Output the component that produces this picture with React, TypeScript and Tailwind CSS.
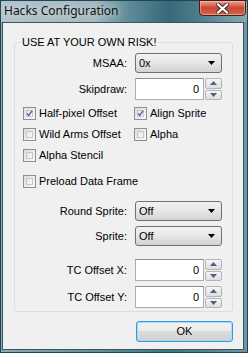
import React from 'react'

const font = { fontFamily: '"Liberation Sans", Arial, sans-serif' }

function Check({ checked, label }: { checked?: boolean; label: string }) {
  return (
    <div className="flex items-center h-[13px]">
      <div className="w-[13px] h-[13px] border border-[#8f8f8f] bg-gradient-to-br from-[#dcdcdc] to-[#fbfbfb] p-[2px] flex items-center justify-center">
        <div className="w-full h-full border border-[#c7c7c7] bg-gradient-to-br from-[#e4e4e4] to-[#fafafa] flex items-center justify-center">
          {checked && (
            <svg width="9" height="9" viewBox="0 0 9 9" className="-m-[1px]">
              <path d="M1.5 4.5 L3.6 7 L7.8 1.2" fill="none" stroke="#4a5f97" strokeWidth="1.7" />
            </svg>
          )}
        </div>
      </div>
      <span className="ml-[3px] text-[11px] leading-[13px] text-black whitespace-nowrap">{label}</span>
    </div>
  )
}

function Combo({ value }: { value: string }) {
  return (
    <div className="w-[87px] h-[20px] rounded-[3px] border border-[#707070] bg-gradient-to-b from-[#f2f2f2] via-[#e6e6e6] to-[#d2d2d2] flex items-center justify-between pl-[3px] pr-[6px]">
      <span className="text-[11px] text-black">{value}</span>
      <svg width="7" height="4" viewBox="0 0 7 4">
        <path d="M0 0 H7 L3.5 4 Z" fill="#000" />
      </svg>
    </div>
  )
}

function Spin({ value }: { value: string }) {
  return (
    <div className="flex h-[22px]">
      <div className="w-[69px] h-full border border-[#abadb3] border-t-[#8a8c93] bg-white flex items-center justify-end pr-[4px]">
        <span className="text-[11px] text-black">{value}</span>
      </div>
      <div className="w-[17px] h-full flex flex-col ml-[1px] gap-[1px]">
        {[0, 1].map(i => (
          <div key={i} className="flex-1 border border-[#b5b5b5] rounded-[2px] bg-gradient-to-b from-[#f6f6f6] to-[#dedede] flex items-center justify-center">
            <svg width="7" height="4" viewBox="0 0 7 4">
              <path d={i === 0 ? 'M0 4 H7 L3.5 0 Z' : 'M0 0 H7 L3.5 4 Z'} fill="#4d6185" />
            </svg>
          </div>
        ))}
      </div>
    </div>
  )
}

function Row({ label, children, className }: { label: string; children: React.ReactNode; className?: string }) {
  return (
    <div className={`flex items-center ${className ?? ''}`}>
      <div className="w-[113px] text-right text-[11px] text-black pr-[1px]">{label}</div>
      <div className="ml-[7px]">{children}</div>
    </div>
  )
}

export default function App() {
  return (
    <div
      className="w-[248px] h-[353px] flex flex-col border border-[#1d4853] bg-[linear-gradient(to_right,#8fa9b1,#5f8d99_40%,#3f7381_70%,#6f97a2)] pl-[1px] pr-[3px] pb-[2px]"
      style={font}
    >
      <div className="h-[21px] -ml-[1px] -mr-[3px] pl-[1px] pr-[1px] flex items-start justify-between bg-[linear-gradient(to_right,#b3c4ca,#a3b7be_38%,#5f8b97_52%,#37697a_68%,#4d7d8a_80%,#88a7b1)]">
        <span className="mt-[1px] ml-[2px] text-[12px] leading-[17px] text-[#111] [text-shadow:0_0_6px_#e6eef0]" style={{ fontFamily: '"Noto Sans", "Open Sans", sans-serif' }}>
          Hacks Configuration
        </span>
        <div className="w-[47px] h-[16px] -mt-[1px] rounded-b-[4px] border border-[#4a1a14] bg-gradient-to-b from-[#e4a494] via-[#c9452f] to-[#d8664a] flex items-center justify-center shadow-[inset_0_0_0_1px_rgba(255,200,190,0.5)]">
          <svg width="13" height="11" viewBox="0 0 13 11">
            <path d="M2 1.5 L11 9.5 M11 1.5 L2 9.5" stroke="#3a2b2b" strokeWidth="4" strokeLinecap="square" />
            <path d="M2 1.5 L11 9.5 M11 1.5 L2 9.5" stroke="#fff" strokeWidth="2.2" strokeLinecap="square" />
          </svg>
        </div>
      </div>
      <div className="flex-1 border border-[#3a5660] bg-[#f0f0f0] flex flex-col">
        <div className="relative mt-[19px] ml-[11px] w-[219px] h-[270px] border border-[#d5dfe5] rounded-[3px] flex flex-col">
          <span className="absolute -top-[7px] left-[5px] px-[2px] bg-[#f0f0f0] text-[11px] leading-[13px] text-black">
            USE AT YOUR OWN RISK!
          </span>
          <Row label="MSAA:" className="mt-[10px]">
            <Combo value="0x" />
          </Row>
          <Row label="Skipdraw:" className="mt-[5px]">
            <Spin value="0" />
          </Row>
          <div className="mt-[7px] ml-[8px] flex flex-col gap-[8px]">
            <div className="flex">
              <div className="w-[111px]"><Check checked label="Half-pixel Offset" /></div>
              <Check checked label="Align Sprite" />
            </div>
            <div className="flex">
              <div className="w-[111px]"><Check label="Wild Arms Offset" /></div>
              <Check label="Alpha" />
            </div>
            <Check label="Alpha Stencil" />
            <div className="mt-[5px]"><Check label="Preload Data Frame" /></div>
          </div>
          <Row label="Round Sprite:" className="mt-[13px]">
            <Combo value="Off" />
          </Row>
          <Row label="Sprite:" className="mt-[5px]">
            <Combo value="Off" />
          </Row>
          <Row label="TC Offset X:" className="mt-[13px]">
            <Spin value="0" />
          </Row>
          <Row label="TC Offset Y:" className="mt-[5px]">
            <Spin value="0" />
          </Row>
        </div>
        <div className="mt-[9px] ml-[133px] w-[97px] h-[21px] rounded-[3px] border border-[#3399dd] bg-[linear-gradient(to_bottom,#f2f2f2,#ebebeb_45%,#dddddd_50%,#cfcfcf)] shadow-[inset_0_0_0_1px_#a8dcf6] flex items-center justify-center">
          <span className="text-[11px] text-black">OK</span>
        </div>
      </div>
    </div>
  )
}
